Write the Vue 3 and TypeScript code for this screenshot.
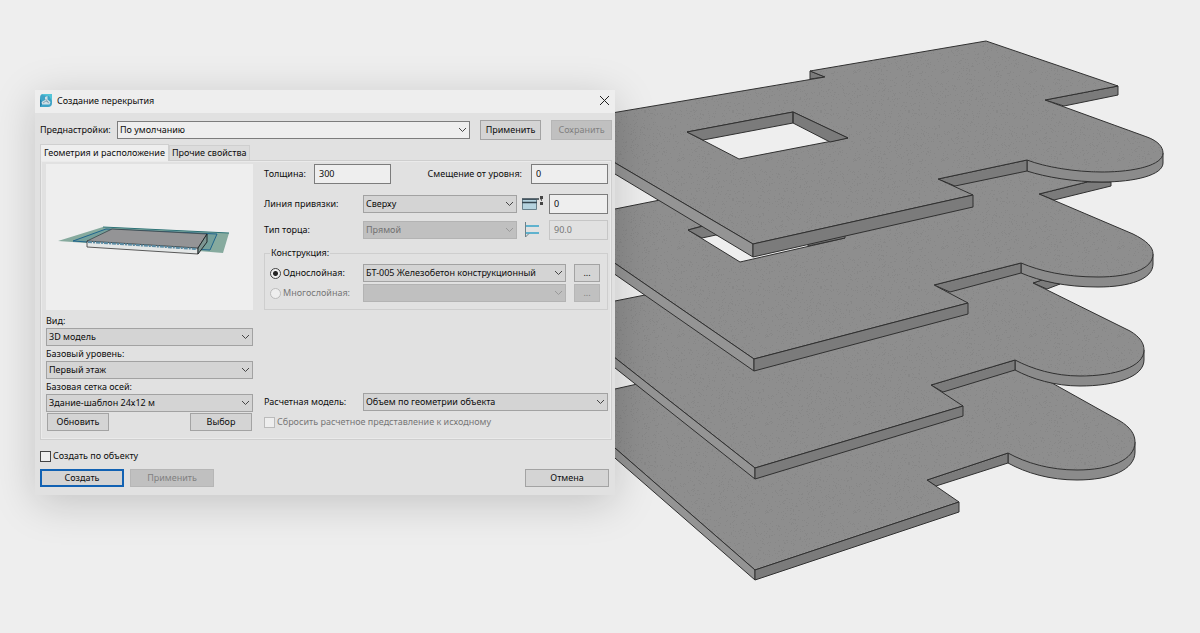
<script setup lang="ts">
import { ref } from 'vue'

interface Slab {
  back: string
  left: string
  front: string
  notch: string
  arc: string
  top: string
  edges: string
}

const preset = ref('По умолчанию')
const thickness = ref('300')
const levelOffset = ref('0')
const anchorLine = ref('Сверху')
const anchorOffset = ref('0')
const edgeType = ref('Прямой')
const edgeAngle = ref('90.0')
const layering = ref('single')
const material = ref('БТ-005 Железобетон конструкционный')
const viewMode = ref('3D модель')
const baseLevel = ref('Первый этаж')
const axisGrid = ref('Здание-шаблон 24х12 м')
const calcModel = ref('Объем по геометрии объекта')
const resetModel = ref(false)
const byObject = ref(false)

// Storeys from the lowest to the highest, so that upper ones cover lower ones.
const slabs: Slab[] = [
  {
    back: '',
    left: 'M600,435 L755,570 V580 L600,445 Z',
    front: 'M755,570 L959,502 V512 L755,580 Z',
    notch: 'M927,480 L1008,453 V463 L936,486 Z',
    arc: 'M1135,442 V452 C1135,470 1110,480 1077,480 C1050,480 1026,473 1008,463 V453 Z',
    top: 'M600,392 L615,389 L700,370 L900,350 L1015,362 L1052,383 L1120,421 C1130,427 1135,434 1135,442 C1135,460 1110,470 1077,470 C1050,470 1026,463 1008,453 L927,480 L959,502 L755,570 L600,435 Z',
    edges: '',
  },
  {
    back: 'M1033,283 L1042,280 L1060,284 L1047,289 Z',
    left: 'M600,346 L755,468 V479 L600,356 Z',
    front: 'M755,468 L963,406 V416 L755,479 Z',
    notch: 'M931,385 L1015,360 V370 L943,392 Z',
    arc: 'M1144,350 V360 C1144,377 1115,386 1080,386 C1055,386 1032,379 1015,370 V360 Z',
    top: 'M600,304 L615,301 L700,284 L900,250 L1025,262 L1042,280 L1033,283 L1130,331 C1140,337 1144,343 1144,350 C1144,367 1115,376 1080,376 C1055,376 1032,369 1015,360 L931,385 L963,406 L755,468 L600,346 Z',
    edges: '',
  },
  {
    back: 'M1039,194 L1087,182 L1111,182 V186 L1054,200 Z',
    left: 'M600,253 L754,359 V371 L600,264 Z',
    front: 'M754,359 L968,303 V314 L754,371 Z',
    notch: 'M934,285 L1021,263 V273 L950,292 Z',
    arc: 'M1153,254 V264 C1153,279 1130,287 1098,287 C1065,287 1040,281 1021,273 V263 Z',
    top: 'M600,212 L615,209 L700,192 L900,160 L1060,165 L1087,182 L1039,194 L1133,234 C1147,241 1153,247 1153,254 C1153,269 1130,277 1098,277 C1065,277 1040,271 1021,263 L934,285 L968,303 L754,359 L600,253 Z M688,230 L740,262 L845,238 L793,200 Z',
    edges: 'M688,230 L715,223 L740,242 L716,235 L702,238 Z M808,242 L845,234 V238 L808,246 Z',
  },
  {
    back: 'M810,71 L825,77 L810,79 Z M1045,100 L1118,86 V95 L1064,106 Z',
    left: 'M600,154 L753,244 V257 L600,165 Z',
    front: 'M753,244 L973,195 V207 L753,257 Z',
    notch: 'M938,179 L1027,160 V171 L955,186 Z',
    arc: 'M1163,153 V163 C1163,175 1135,182 1102,182 C1075,182 1045,177 1027,171 V160 Z',
    top: 'M600,115 L825,77 L810,71 L986,41 L1118,86 L1045,100 L1147,137 C1158,141 1163,147 1163,153 C1163,165 1135,172 1102,172 C1075,172 1045,167 1027,160 L938,179 L973,195 L753,244 L600,154 Z M687,132 L739,159 L848,138 L793,112 Z',
    edges: 'M687,132 L793,112 V123 L703,140 Z M793,112 L848,138 L830,142 L793,123 Z',
  },
]

// Fine speckle of the concrete surface; a fixed seed keeps it stable.
const speckle = (() => {
  let seed = 41
  const next = () => (seed = (seed * 16807) % 2147483647) / 2147483647
  let d = ''
  for (let i = 0; i < 700; i++) {
    const x = Math.floor(next() * 88)
    const y = Math.floor(next() * 88)
    d += `M${x},${y}h1v1h-1z`
  }
  return d
})()
</script>

<template>
  <main class="stage">
    <form class="dialog" @submit.prevent>
      <header class="titlebar">
        <svg class="logo" viewBox="0 0 12 13" aria-hidden="true">
          <path d="M3 0H12V9Q12 13 8 13H0V4Q0 0 3 0Z" fill="#3fa3c6" />
          <path d="M3 0H12V7L9 2L2 1Z" fill="#54c5d8" />
          <path d="M0 5L3 9L0 13Z" fill="#2380aa" />
          <path d="M5 3L7.500 2V5.500L10.500 8L9.500 10.500H2L1.500 8L5 6Z" fill="#cfdfe6" />
          <path d="M5.500 5L8 8M3 9L6 7L9 9" stroke="#6d8fa2" stroke-width=".7" fill="none" />
        </svg>
        <h1>Создание перекрытия</h1>
        <button type="button" class="close" aria-label="Закрыть">
          <svg viewBox="0 0 11 11"><path d="M1 1L10 10M10 1L1 10" /></svg>
        </button>
      </header>

      <div class="body">
        <div class="preset-row">
          <label for="preset">Преднастройки:</label>
          <span class="select light">
            <select id="preset" v-model="preset"><option>По умолчанию</option></select>
            <svg viewBox="0 0 9 6"><path d="M1 1L4.500 4.500L8 1" /></svg>
          </span>
          <button type="button" class="btn">Применить</button>
          <button type="button" class="btn" disabled>Сохранить</button>
        </div>

        <div class="tabs" role="tablist">
          <button type="button" role="tab" class="tab active" aria-selected="true">Геометрия и расположение</button>
          <button type="button" role="tab" class="tab" aria-selected="false">Прочие свойства</button>
        </div>

        <section class="panel">
          <div class="left">
            <svg class="preview" viewBox="0 0 207 146" aria-hidden="true">
              <path d="M12 77L57 63L183 69L177 89L140 86Z" fill="#86aa9e" />
              <path d="M27 77L60 65L171 70L164 86L126 84Z" fill="#75a09b" stroke="#1f648c" />
              <path d="M41 77V83L152 90V84Z" fill="#e4e7e7" stroke="#333" stroke-width=".8" />
              <path d="M41 77L66 65L161 70L152 84Z" fill="#949496" stroke="#3a4549" stroke-width=".8" />
              <path d="M42 78L151 85" stroke="#5b8ba3" stroke-width="2" stroke-dasharray="4 1 2 1" />
              <path d="M57 63L183 69" stroke="#2f7478" />
              <path d="M152 84L161 70V78L152 90Z" fill="#7d9692" stroke="#22282a" />
            </svg>
            <label for="view">Вид:</label>
            <span class="select">
              <select id="view" v-model="viewMode"><option>3D модель</option></select>
              <svg viewBox="0 0 9 6"><path d="M1 1L4.500 4.500L8 1" /></svg>
            </span>
            <label for="level">Базовый уровень:</label>
            <span class="select">
              <select id="level" v-model="baseLevel"><option>Первый этаж</option></select>
              <svg viewBox="0 0 9 6"><path d="M1 1L4.500 4.500L8 1" /></svg>
            </span>
            <label for="axes">Базовая сетка осей:</label>
            <span class="select">
              <select id="axes" v-model="axisGrid"><option>Здание-шаблон 24х12 м</option></select>
              <svg viewBox="0 0 9 6"><path d="M1 1L4.500 4.500L8 1" /></svg>
            </span>
            <div class="grid-actions">
              <button type="button" class="btn">Обновить</button>
              <button type="button" class="btn">Выбор</button>
            </div>
          </div>

          <div class="right">
            <div class="row">
              <label for="thickness" class="cap short">Толщина:</label>
              <input id="thickness" v-model="thickness" class="field medium" type="text" />
              <label for="offset" class="push">Смещение от уровня:</label>
              <input id="offset" v-model="levelOffset" class="field medium" type="text" />
            </div>
            <div class="row second">
              <label for="anchor" class="cap">Линия привязки:</label>
              <span class="select">
                <select id="anchor" v-model="anchorLine"><option>Сверху</option></select>
                <svg viewBox="0 0 9 6"><path d="M1 1L4.500 4.500L8 1" /></svg>
              </span>
              <svg class="glyph" viewBox="0 0 24 18" aria-hidden="true">
                <path d="M1.500 4.500H15.500V14.500H1.500Z" fill="#b5d3df" stroke="#69818c" />
                <path d="M1 7.500H16M1 4H18" stroke="#344650" stroke-width="1.500" />
                <path d="M16 4H21M20.500 1V9" stroke="#666" stroke-dasharray="2 1" />
                <path d="M19 1H22V4H19ZM19 7H22V10H19Z" fill="#444" />
              </svg>
              <input v-model="anchorOffset" class="field small" type="text" aria-label="Смещение линии привязки" />
            </div>
            <div class="row third">
              <label for="edge" class="cap">Тип торца:</label>
              <span class="select">
                <select id="edge" v-model="edgeType" disabled><option>Прямой</option></select>
                <svg viewBox="0 0 9 6"><path d="M1 1L4.500 4.500L8 1" /></svg>
              </span>
              <svg class="glyph" viewBox="0 0 24 18" aria-hidden="true">
                <path d="M4.500 5H18M4.500 12H18" stroke="#35a3c8" stroke-width="1.500" />
                <path d="M4.500 1V16L8 12.500" stroke="#6d8189" />
              </svg>
              <input v-model="edgeAngle" class="field small" type="text" aria-label="Угол торца" disabled />
            </div>
            <fieldset>
              <legend>Конструкция:</legend>
              <div class="row layer">
                <label class="cap choice"><input v-model="layering" type="radio" name="layering" value="single" />Однослойная:</label>
                <span class="select">
                  <select v-model="material" aria-label="Материал"><option>БТ-005 Железобетон конструкционный</option></select>
                  <svg viewBox="0 0 9 6"><path d="M1 1L4.500 4.500L8 1" /></svg>
                </span>
                <button type="button" class="btn dots">...</button>
              </div>
              <div class="row layer">
                <label class="cap choice off"><input v-model="layering" type="radio" name="layering" value="multi" disabled />Многослойная:</label>
                <span class="select">
                  <select aria-label="Состав слоев" disabled></select>
                  <svg viewBox="0 0 9 6"><path d="M1 1L4.500 4.500L8 1" /></svg>
                </span>
                <button type="button" class="btn dots" disabled>...</button>
              </div>
            </fieldset>
            <div class="row calc">
              <label for="calc" class="cap">Расчетная модель:</label>
              <span class="select">
                <select id="calc" v-model="calcModel"><option>Объем по геометрии объекта</option></select>
                <svg viewBox="0 0 9 6"><path d="M1 1L4.500 4.500L8 1" /></svg>
              </span>
            </div>
            <label class="choice off reset"><input v-model="resetModel" type="checkbox" disabled />Сбросить расчетное представление к исходному</label>
          </div>
        </section>

        <label class="choice by-object"><input v-model="byObject" type="checkbox" />Создать по объекту</label>
        <footer>
          <button type="submit" class="btn primary">Создать</button>
          <button type="button" class="btn" disabled>Применить</button>
          <button type="button" class="btn cancel">Отмена</button>
        </footer>
      </div>
    </form>

    <svg class="scene" viewBox="615 0 585 633" preserveAspectRatio="xMinYMin meet" role="img" aria-label="Модель перекрытий">
      <defs>
        <pattern id="speckle" width="88" height="88" patternUnits="userSpaceOnUse">
          <path :d="speckle" fill="#777" fill-opacity=".3" />
        </pattern>
      </defs>
      <g v-for="(slab, i) in slabs" :key="i" class="slab">
        <path :d="slab.back" class="dark" />
        <path :d="slab.arc" class="mid" />
        <path :d="slab.notch" class="dark" />
        <path :d="slab.top" class="face" />
        <path :d="slab.top" class="grain" />
        <path :d="slab.edges" class="dark" />
        <path :d="slab.left" class="lit" />
        <path :d="slab.front" class="dark" />
      </g>
    </svg>
  </main>
</template>

<style>
body {
  margin: 0;
  background: #eee;
}
</style>

<style scoped>
* {
  box-sizing: border-box;
}

.stage {
  display: flex;
  align-items: flex-start;
  min-height: 100vh;
  padding-left: 35px;
  overflow: hidden;
  background: #eee;
}

.scene {
  flex: 1 1 0;
  min-width: 0;
}

.slab path {
  stroke: #303030;
  stroke-width: 1;
  stroke-linejoin: round;
  fill-rule: evenodd;
}

.slab .face { fill: #8e8e8e; }
.slab .lit { fill: #949494; }
.slab .mid { fill: #8b8b8b; }
.slab .dark { fill: #7b7b7b; }
.slab .grain { fill: url(#speckle); stroke: none; }

.dialog {
  position: relative;
  z-index: 1;
  flex: 0 1 580px;
  margin-top: 90px;
  background: #e1e1e1;
  box-shadow: 0 8px 40px rgba(0, 0, 0, .18);
  font: 9px/14px "Noto Sans", "Open Sans", sans-serif;
  color: #0c0c0c;
}

button, input, select {
  margin: 0;
  font: inherit;
  color: inherit;
}

.titlebar {
  display: flex;
  align-items: center;
  height: 23px;
  padding: 0 5px 2px;
  background: #eee;
}

.logo {
  width: 12px;
  height: 13px;
}

h1 {
  flex: 1;
  margin: 0 0 0 5px;
  font-size: inherit;
  font-weight: 400;
}

.close {
  width: 11px;
  height: 11px;
  padding: 0;
  border: 0;
  background: none;
}

.close svg {
  display: block;
  stroke: #222;
  stroke-width: 1;
}

.body {
  padding: 7px 3px 8px 5px;
}

.preset-row {
  display: flex;
  align-items: center;
  gap: 10px;
}

.preset-row label {
  width: 67px;
  white-space: nowrap;
}

.preset-row .btn {
  width: 61px;
  height: 20px;
}

.select {
  position: relative;
  display: flex;
  flex: 1;
  height: 18px;
}

.left .select {
  flex: none;
}

select {
  width: 100%;
  padding: 0 0 0 2px;
  border: 1px solid #a2a2a2;
  border-radius: 0;
  appearance: none;
  background: #d4d4d4;
  opacity: 1;
}

.light select {
  border-color: #7c7c7c;
  background: #eee;
}

select:disabled {
  border-color: #b3b3b3;
  background: #c0c0c0;
  color: #717171;
}

.select svg {
  position: absolute;
  top: 6px;
  right: 3px;
  width: 9px;
  height: 6px;
  fill: none;
  stroke: #444;
  pointer-events: none;
}

select:disabled + svg {
  stroke: #999;
}

.btn {
  height: 18px;
  padding: 0;
  border: 1px solid #a3a3a3;
  background: #d4d4d4;
  text-align: center;
  line-height: 14px;
}

.btn:disabled {
  border-color: #b6b6b6;
  background: #c0c0c0;
  color: #808080;
}

.tabs {
  display: flex;
  align-items: flex-end;
  margin-top: 4px;
}

.tab {
  height: 15px;
  padding: 0 2px;
  border: 1px solid #cfcfcf;
  border-bottom: 0;
  background: #dcdcdc;
  line-height: 14px;
}

.tab.active {
  position: relative;
  z-index: 1;
  height: 17px;
  margin-bottom: -1px;
  padding: 0 3px;
  background: #eee;
}

.panel {
  display: flex;
  gap: 11px;
  padding: 3px 3px 8px 5px;
  border: 1px solid #cecece;
  box-shadow: inset 0 0 0 1px #eaeaea;
}

.left {
  display: flex;
  flex: 0 0 207px;
  flex-direction: column;
}

.left .select {
  margin-bottom: 1px;
}

.preview {
  width: 100%;
  height: 146px;
  margin-bottom: 4px;
  background: #eee;
  fill: none;
}

.grid-actions {
  display: flex;
  justify-content: space-between;
  padding: 0 1px;
}

.grid-actions .btn {
  width: 62px;
}

.right {
  display: flex;
  flex: 1;
  flex-direction: column;
  min-width: 0;
}

.row {
  display: flex;
  align-items: center;
}

.second { margin-top: 10px; }
.third { margin-top: 6px; }

.cap {
  flex: 0 0 99px;
  white-space: nowrap;
}

.cap.short {
  flex-basis: 50px;
}

.push {
  margin: 0 9px 0 auto;
}

.field {
  height: 20px;
  padding: 0 4px 2px;
  border: 1px solid #7c7c7c;
  border-radius: 0;
  background: #eee;
}

.field:disabled {
  border-color: #c6c6c6;
  background: #e1e1e1;
  color: #777;
}

.medium { width: 77px; }
.small { width: 59px; }

.glyph {
  width: 24px;
  height: 18px;
  margin: 0 4px;
  fill: none;
}

fieldset {
  min-width: 0;
  margin: 6px 0 0;
  padding: 4px 7px 7px 8px;
  border: 1px solid #cecece;
}

legend {
  padding: 0 1px;
  margin-left: -3px;
}

.layer + .layer {
  margin-top: 2px;
}

.layer .cap {
  flex-basis: 90px;
}

.dots {
  width: 26px;
  margin-left: 8px;
}

.choice {
  display: flex;
  align-items: center;
  gap: 2px;
}

.choice input {
  flex: none;
  width: 11px;
  height: 11px;
  border: 1px solid #444;
  appearance: none;
  background: #eee;
}

.choice input[type="radio"] {
  border-radius: 50%;
}

.layer .choice input {
  margin-left: -3px;
}

.choice input[type="radio"]:checked {
  background: radial-gradient(circle, #222 0 2px, #eee 3px);
}

.choice.off {
  color: #777;
}

.choice.off input {
  border-color: #bbb;
}

.calc {
  margin-top: auto;
}

.reset {
  margin: 4px 0 2px;
}

.by-object {
  margin-top: 9px;
}

footer {
  display: flex;
  gap: 6px;
  margin-top: 6px;
}

footer .btn {
  width: 84px;
}

.btn.primary {
  border: 2px solid #1262b3;
}

.cancel {
  margin: 0 3px 0 auto;
}
</style>
